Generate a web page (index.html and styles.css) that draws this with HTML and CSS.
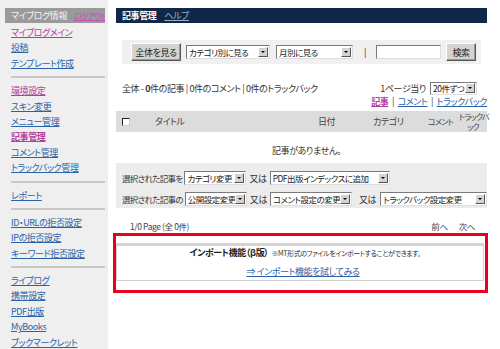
FILE: index.html
```html
<!DOCTYPE html>
<html lang="ja">
<head>
<meta charset="utf-8">
<title>記事管理</title>
<link rel="stylesheet" href="styles.css">
</head>
<body>
<div class="page">
  <aside class="sidebar">
    <div class="side-head"><span class="side-title">マイブログ情報</span><a class="logout" href="#">ログアウト</a></div>
    <ul class="nav">
      <li><a class="visited" href="#">マイブログメイン</a></li>
      <li><a href="#">投稿</a></li>
      <li><a href="#">テンプレート作成</a></li>
    </ul>
    <hr class="sep">
    <ul class="nav">
      <li><a class="visited" href="#">環境設定</a></li>
      <li><a href="#">スキン変更</a></li>
      <li><a href="#">メニュー管理</a></li>
      <li><a class="visited current" href="#">記事管理</a></li>
      <li><a href="#">コメント管理</a></li>
      <li><a href="#">トラックバック管理</a></li>
    </ul>
    <hr class="sep">
    <ul class="nav">
      <li><a href="#">レポート</a></li>
    </ul>
    <hr class="sep">
    <ul class="nav">
      <li><a href="#">ID・URLの拒否設定</a></li>
      <li><a href="#">IPの拒否設定</a></li>
      <li><a href="#">キーワード拒否設定</a></li>
    </ul>
    <hr class="sep">
    <ul class="nav">
      <li><a href="#">ライブログ</a></li>
      <li><a href="#">携帯設定</a></li>
      <li><a href="#">PDF出版</a></li>
      <li><a href="#">MyBooks</a></li>
      <li><a href="#">ブックマークレット</a></li>
    </ul>
  </aside>

  <main class="main">
    <div class="main-head"><span class="main-title">記事管理</span><a class="help" href="#">ヘルプ</a></div>

    <div class="toolbar">
      <span class="btn btn-all">全体を見る</span>
      <span class="sel sel-cat"><span class="sel-text">カテゴリ別に見る</span><span class="arrow"></span></span>
      <span class="sel sel-month"><span class="sel-text">月別に見る</span><span class="arrow"></span></span>
      <span class="bar">|</span>
      <span class="textbox"></span>
      <span class="btn btn-search">検索</span>
    </div>

    <div class="stats">
      <span class="stats-text">全体 - <b>0</b>件の記事 | 0件のコメント | 0件のトラックバック</span>
      <span class="perpage">1ページ当り <span class="sel sel-per"><span class="sel-text">20件ずつ</span><span class="arrow"></span></span></span>
    </div>
    <div class="tabs"><a class="visited strong" href="#">記事</a> | <a href="#">コメント</a> | <a href="#">トラックバック</a></div>

    <div class="thead">
      <span class="col-check"><span class="checkbox"></span></span>
      <span class="col-title">タイトル</span>
      <span class="col-date">日付</span>
      <span class="col-cat">カテゴリ</span>
      <span class="col-com">コメント</span>
      <span class="col-tb">トラックバ<br>ック</span>
    </div>
    <div class="empty">記事がありません。</div>

    <div class="actions">
      <div class="act-row">
        <span class="act-label">選択された記事を</span>
        <span class="sel sel-a1"><span class="sel-text">カテゴリ変更</span><span class="arrow"></span></span>
        <span class="or">又は</span>
        <span class="sel sel-a2"><span class="sel-text">PDF出版インデックスに追加</span><span class="arrow"></span></span>
      </div>
      <div class="act-row">
        <span class="act-label">選択された記事の</span>
        <span class="sel sel-a1"><span class="sel-text">公開設定変更</span><span class="arrow"></span></span>
        <span class="or">又は</span>
        <span class="sel sel-b2"><span class="sel-text">コメント設定の変更</span><span class="arrow"></span></span>
        <span class="or or2">又は</span>
        <span class="sel sel-b3"><span class="sel-text">トラックバック設定変更</span><span class="arrow"></span></span>
      </div>
    </div>

    <div class="pager">
      <span class="pageinfo">1/0 Page (全 0件)</span>
      <span class="prevnext"><span>前へ</span><span>次へ</span></span>
    </div>

    <div class="import-frame">
      <div class="import-box">
        <div class="import-title"><b>インポート機能（β版）</b><span class="note">※MT形式のファイルをインポートすることができます。</span></div>
        <div class="import-link"><a href="#">⇒ インポート機能を試してみる</a></div>
      </div>
    </div>
  </main>
</div>
</body>
</html>
```

FILE: styles.css
```css
* { box-sizing: border-box; }
html, body { margin: 0; padding: 0; background: #fff; }
body {
  font-family: "Noto Sans CJK JP", "Noto Sans", sans-serif;
  font-size: 9px;
  font-feature-settings: "palt";
  letter-spacing: -0.4px;
  color: #333;
  width: 500px;
  height: 349px;
  overflow: hidden;
  white-space: nowrap;
}
a { color: #2a62a8; text-decoration: underline; }
a.visited { color: #b0409c; }

.page { display: flex; height: 349px; }

/* sidebar */
.sidebar {
  width: 108px;
  flex: none;
  background: #efefef;
  padding: 8px 3px 0 5px;
}
.side-head {
  height: 15px;
  background: #9a9a9a;
  display: flex;
  align-items: center;
  padding-left: 6px;
  line-height: 15px;
  overflow: hidden;
}
.side-title { font-size: 9px; color: #f4f4f4; }
.logout { margin-left: 7px; color: #c050b8; font-size: 8px; letter-spacing: -0.7px; }
.nav { list-style: none; margin: 0; padding: 0 0 0 6px; }
.nav li { height: 15.4px; line-height: 15.4px; font-size: 9px; }
.nav a.current { font-weight: bold; }
.sidebar > .nav:first-of-type { margin-top: 2px; }
.sep {
  border: 0;
  height: 2px;
  background: #c8c8c8;
  margin: 5px 0 5px 6px;
}

/* main */
.main { width: 371px; margin-left: 8px; padding-top: 8px; }
.main-head {
  height: 15px;
  background: #0f2847;
  display: flex;
  align-items: center;
  padding-left: 6px;
  line-height: 15px;
}
.main-title { color: #fff; font-weight: bold; font-size: 9px; }
.help { color: #9bb0c8; margin-left: 8px; font-size: 9px; }

.toolbar {
  margin: 17px 6px 0 6px;
  height: 24px;
  background: #f0f0f0;
  display: flex;
  align-items: center;
  padding-left: 9px;
}
.btn {
  display: inline-flex;
  align-items: center;
  justify-content: center;
  height: 18px;
  background: #d6d3ce;
  border: 1px solid;
  border-color: #fff #555 #555 #fff;
  box-shadow: inset -1px -1px 0 #999;
  font-size: 9px;
  color: #222;
  flex: none;
}
.btn-all { width: 50px; }
.btn-search { width: 30px; margin-left: 5px; }
.sel {
  display: inline-flex;
  align-items: center;
  height: 14px;
  background: #fff;
  border: 1px solid #7a7a7a;
  border-right-color: #ddd;
  border-bottom-color: #ddd;
  font-size: 8.5px;
  letter-spacing: -0.5px;
  color: #222;
  overflow: hidden;
  flex: none;
}
.sel-text { flex: 1; padding-left: 2px; line-height: 12px; overflow: hidden; }
.arrow {
  width: 10px;
  height: 10px;
  margin-right: 1px;
  background: #d6d3ce;
  border: 1px solid;
  border-color: #fff #555 #555 #fff;
  position: relative;
  flex: none;
}
.arrow::after {
  content: "";
  position: absolute;
  left: 2px;
  top: 3px;
  border-left: 2px solid transparent;
  border-right: 2px solid transparent;
  border-top: 2px solid #000;
}
.sel-cat { width: 84px; margin-left: 5px; }
.sel-month { width: 77px; margin-left: 6px; }
.bar { margin-left: 11px; font-size: 9px; color: #222; }
.textbox {
  width: 65px;
  height: 14px;
  margin-left: 10px;
  background: #fff;
  border: 1px solid #7a7a7a;
  border-right-color: #ddd;
  border-bottom-color: #ddd;
  flex: none;
}

.stats {
  margin-top: 17px;
  display: flex;
  align-items: center;
  justify-content: space-between;
  padding: 0 10px 0 6px;
  height: 14px;
}
.stats-text { font-size: 9px; color: #333; }
.stats-text b { font-weight: bold; }
.perpage { font-size: 9px; display: flex; align-items: center; }
.sel-per { width: 47px; margin-left: 4px; height: 13px; }

.tabs {
  text-align: right;
  font-size: 9px;
  height: 14px;
  line-height: 14px;
  color: #333;
}
.tabs a { margin: 0 2px; }
.tabs a:last-child { margin-right: 0; }
.tabs a.strong { font-weight: bold; }

.thead {
  margin-top: 2px;
  height: 21px;
  background: #dcdcdc;
  display: flex;
  align-items: center;
  font-size: 9px;
  color: #444;
}
.col-check { width: 39px; padding-left: 6px; display: flex; flex: none; }
.checkbox {
  width: 8px;
  height: 8px;
  background: #fff;
  border: 1px solid #222;
  border-right-color: #ccc;
  border-bottom-color: #ccc;
}
.col-title { width: 163px; flex: none; }
.col-date { width: 55px; flex: none; }
.col-cat { width: 55px; flex: none; }
.col-com { width: 31px; flex: none; font-size: 8px; letter-spacing: -0.7px; }
.col-tb {
  width: 28px;
  line-height: 10px;
  text-align: center;
  flex: none;
  font-size: 8px;
  letter-spacing: -0.8px;
}

.empty {
  height: 31px;
  line-height: 37px;
  text-align: center;
  font-size: 9px;
  color: #333;
  padding-left: 10px;
}

.actions {
  height: 45px;
  background: #ececec;
  padding: 8px 0 0 6px;
  display: flex;
  flex-direction: column;
  gap: 7px;
}
.act-row { display: flex; align-items: center; height: 14px; font-size: 9px; color: #333; }
.act-label { flex: none; margin-right: 2px; font-size: 8.5px; letter-spacing: -0.7px; }
.or { margin: 0 3px 0 3px; flex: none; }
.sel-a1 { width: 62px; }
.sel-a2 { width: 120px; }
.sel-b2 { width: 82px; }
.sel-b3 { width: 107px; }
.or2 { margin: 0 4px 0 7px; }

.pager {
  display: flex;
  justify-content: space-between;
  align-items: center;
  height: 14px;
  margin-top: 11px;
  padding: 0 12px 0 14px;
  font-size: 8.5px;
  color: #444;
}
.prevnext { display: flex; gap: 11px; }

.import-frame {
  margin: 0 -1px 0 -3px;
  border: 3px solid #e8001f;
  padding: 7px 1px 9px 0;
}
.import-box {
  border: 1px solid #d0d0d0;
  border-top: 3px solid #d4d4d4;
  height: 38px;
  text-align: center;
}
.import-title { font-size: 9px; color: #222; line-height: 14px; padding-left: 10px; }
.import-title b { font-weight: bold; }
.note { font-size: 7px; color: #333; margin-left: 3px; }
.import-link { font-size: 9px; line-height: 14px; margin-top: 5px; padding-left: 6px; }
```
